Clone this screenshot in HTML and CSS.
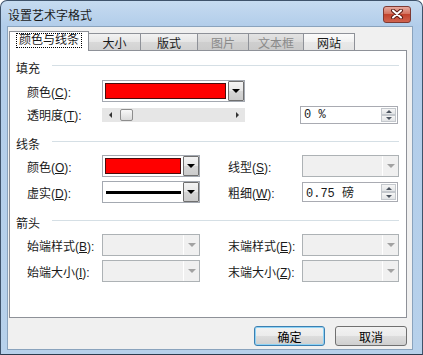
FILE: index.html
```html
<!DOCTYPE html>
<html lang="zh-CN">
<head>
    <meta charset="UTF-8">
    <title>设置艺术字格式</title>
    <link rel="stylesheet" href="styles.css">
</head>
<body>
    <div class="window">
        <div class="titlebar">
            <span class="title">设置艺术字格式</span>
            <span class="close">
                <svg width="14" height="10" viewBox="0 0 14 10">
                    <path d="M3 1.5 L11 8.5 M11 1.5 L3 8.5" stroke="#5a1d15" stroke-width="4" stroke-linecap="round"/>
                    <path d="M3 1.5 L11 8.5 M11 1.5 L3 8.5" stroke="#ffffff" stroke-width="2" stroke-linecap="round"/>
                </svg>
            </span>
        </div>

        <div class="client">
            <div class="tabs">
                <div class="tab active"><span class="focus">颜色与线条</span></div>
                <div class="tab t-size">大小</div>
                <div class="tab t-layout">版式</div>
                <div class="tab t-pic disabled">图片</div>
                <div class="tab t-text disabled">文本框</div>
                <div class="tab t-web light">网站</div>
            </div>

            <div class="panel">
                <!-- 填充 -->
                <div class="group"><span>填充</span><i class="rule"></i></div>
                <div class="row r-fill">
                    <span class="lbl">颜色(<u>C</u>):</span>
                    <div class="combo c-wide"><span class="swatch"></span><span class="drop"></span></div>
                </div>
                <div class="row r-alpha">
                    <span class="lbl">透明度(<u>T</u>):</span>
                    <div class="slider">
                        <span class="arr-l"></span>
                        <span class="thumb"></span>
                        <span class="arr-r"></span>
                    </div>
                    <div class="spin s-alpha"><span class="val">0 %</span><span class="spin-btns"><i class="up"></i><i class="down"></i></span></div>
                </div>

                <!-- 线条 -->
                <div class="group g-line"><span>线条</span><i class="rule"></i></div>
                <div class="row r-line">
                    <span class="lbl">颜色(<u>O</u>):</span>
                    <div class="combo c-narrow"><span class="swatch"></span><span class="drop"></span></div>
                    <span class="lbl lbl-right">线型(<u>S</u>):</span>
                    <div class="combo c-right off"><span class="drop"></span></div>
                </div>
                <div class="row r-dash">
                    <span class="lbl">虚实(<u>D</u>):</span>
                    <div class="combo c-narrow"><span class="dash"></span><span class="drop"></span></div>
                    <span class="lbl lbl-right">粗细(<u>W</u>):</span>
                    <div class="spin s-weight"><span class="val">0.75 磅</span><span class="spin-btns"><i class="up"></i><i class="down"></i></span></div>
                </div>

                <!-- 箭头 -->
                <div class="group g-arrow"><span>箭头</span><i class="rule"></i></div>
                <div class="row r-begin">
                    <span class="lbl">始端样式(<u>B</u>):</span>
                    <div class="combo c-narrow off"><span class="drop"></span></div>
                    <span class="lbl lbl-right">末端样式(<u>E</u>):</span>
                    <div class="combo c-right off"><span class="drop"></span></div>
                </div>
                <div class="row r-size">
                    <span class="lbl">始端大小(<u>I</u>):</span>
                    <div class="combo c-narrow off"><span class="drop"></span></div>
                    <span class="lbl lbl-right">末端大小(<u>Z</u>):</span>
                    <div class="combo c-right off"><span class="drop"></span></div>
                </div>
            </div>

            <div class="actions">
                <button class="btn default">确定</button>
                <button class="btn">取消</button>
            </div>
        </div>
    </div>
</body>
</html>
```

FILE: styles.css
```css
body {
    margin: 0;
    background: #ffffff;
    font-family: "Liberation Sans", "Noto Sans CJK SC", sans-serif;
    font-size: 12px;
    color: #1a1a1a;
}

.window {
    width: 423px;
    height: 355px;
    box-sizing: border-box;
    border: 1px solid #3f536b;
    border-bottom-color: #2c3b4d;
    border-radius: 7px 7px 0 0;
    padding: 0 9px 4px 6px;
    background: linear-gradient(#c6dbf0, #b2cdea 25px, #b7d1eb);
}

/* title bar */
.titlebar {
    height: 25px;
    display: flex;
    align-items: center;
    justify-content: space-between;
    padding-left: 1px;
}

.title {
    font-size: 12px;
    color: #1b1b1b;
    margin-top: 2px;
}

.close {
    width: 28px;
    height: 17px;
    margin-right: 2px;
    margin-top: 1px;
    box-sizing: border-box;
    border: 1px solid #7e3a33;
    border-radius: 3px;
    background: linear-gradient(#e6a99f, #d4735f 45%, #c2432c 50%, #d0634f);
    display: flex;
    align-items: center;
    justify-content: center;
}

/* client */
.client {
    height: 324px;
    box-sizing: border-box;
    border: 1px solid #8aa3bd;
    background: #f0f0f0;
}

.tabs {
    height: 23px;
    box-sizing: border-box;
    padding-top: 4px;
    margin-left: 1px;
    display: flex;
    align-items: flex-end;
}

.tab {
    height: 17px;
    box-sizing: border-box;
    border: 1px solid #8e9198;
    border-bottom: none;
    background: linear-gradient(#f2f2f2, #e6e6e6 50%, #d9d9d9 51%, #d2d2d2);
    display: flex;
    align-items: center;
    justify-content: center;
    margin-left: -1px;
}

.tab.active {
    position: relative;
    z-index: 1;
    width: 80px;
    height: 20px;
    margin-left: 0;
    margin-bottom: -1px;
    background: #ffffff;
    padding-bottom: 2px;
}

.focus {
    border: 1px dotted #000000;
    padding: 0 2px;
    line-height: 13px;
}

.t-size { width: 53px; }
.t-layout { width: 58px; }
.t-pic { width: 52px; }
.t-text { width: 56px; }
.t-web { width: 52px; }

.tab.disabled {
    color: #8a8a8a;
    background: linear-gradient(#e3e3e3, #d8d8d8 50%, #cfcfcf 51%, #cacaca);
}

.tab.light {
    background: linear-gradient(#fbfbfb, #f1f1f1 50%, #e9e9e9 51%, #e4e4e4);
}

.panel {
    width: 398px;
    height: 268px;
    margin-left: 1px;
    box-sizing: border-box;
    border: 1px solid #8e9198;
    background: #ffffff;
}

.group {
    height: 14px;
    margin-top: 9px;
    padding-left: 6px;
    display: flex;
    align-items: center;
}

.rule {
    flex: 1;
    height: 1px;
    margin: 0 7px 3px 12px;
    background: #d5dfe5;
}

.g-line,
.g-arrow {
    margin-top: 12px;
}

.row {
    display: flex;
    align-items: center;
    padding-left: 17px;
    height: 22px;
}

.r-fill { margin-top: 6px; }
.r-alpha { margin-top: 3px; height: 19px; }
.r-line { margin-top: 5px; }
.r-dash { margin-top: 4px; }
.r-begin { margin-top: 5px; }
.r-size { margin-top: 4px; }

.lbl {
    width: 75px;
    white-space: nowrap;
}

.lbl-right {
    width: 74px;
    margin-left: 28px;
}

/* combo boxes */
.combo {
    height: 22px;
    box-sizing: border-box;
    border: 1px solid #a4a9b1;
    background: #ffffff;
    display: flex;
    align-items: center;
    padding: 0 0 0 2px;
}

.c-wide { width: 143px; }
.c-narrow { width: 98px; }
.c-right { width: 97px; }

.swatch {
    flex: 1;
    height: 16px;
    box-sizing: border-box;
    border: 1px solid #4a0c0c;
    background: #ff0000;
    margin-right: 2px;
}

.dash {
    flex: 1;
    height: 3px;
    background: #000000;
    margin: 0 2px 0 1px;
}

.drop {
    width: 16px;
    height: 20px;
    box-sizing: border-box;
    border: 1px solid #6f6f6f;
    border-radius: 1px;
    background: linear-gradient(#f4f4f4, #e6e6e6 50%, #d6d6d6 51%, #cbcbcb);
    display: flex;
    align-items: center;
    justify-content: center;
    margin-left: auto;
}

.drop::after {
    content: "";
    border-left: 4px solid transparent;
    border-right: 4px solid transparent;
    border-top: 4px solid #000000;
}

.combo.off {
    background: #f0f0f0;
    border-color: #adb2b5;
}

.combo.off .drop {
    border: none;
    border-left: 1px solid #ffffff;
    background: #f0f0f0;
}

.combo.off .drop::after {
    border-top-color: #a2a2a2;
}

/* slider */
.slider {
    width: 143px;
    height: 14px;
    background: #e6e6e6;
    display: flex;
    align-items: center;
}

.arr-l {
    margin-left: 7px;
    border-top: 3px solid transparent;
    border-bottom: 3px solid transparent;
    border-right: 3px solid #333333;
}

.thumb {
    width: 13px;
    height: 12px;
    margin-left: 8px;
    box-sizing: border-box;
    border: 1px solid #8d8d8d;
    border-radius: 2px;
    background: linear-gradient(#f8f8f8, #dadada);
}

.arr-r {
    margin-left: auto;
    margin-right: 6px;
    border-top: 3px solid transparent;
    border-bottom: 3px solid transparent;
    border-left: 3px solid #333333;
}

/* spin boxes */
.spin {
    box-sizing: border-box;
    border: 1px solid #a9abb2;
    background: #ffffff;
    display: flex;
    align-items: center;
}

.s-alpha {
    width: 98px;
    height: 18px;
    margin-left: 55px;
}

.s-weight {
    width: 96px;
    height: 20px;
}

.val {
    padding-left: 3px;
    flex: 1;
    font-family: "Liberation Mono", "Noto Sans CJK SC", monospace;
}

.spin-btns {
    width: 15px;
    height: calc(100% - 2px);
    margin-right: 1px;
    display: flex;
    flex-direction: column;
}

.spin-btns i {
    flex: 1;
    box-sizing: border-box;
    border: 1px solid #c4c8cd;
    background: linear-gradient(#f6f6f6, #e2e4e6);
    display: flex;
    align-items: center;
    justify-content: center;
}

.spin-btns i.up::after {
    content: "";
    border-left: 3px solid transparent;
    border-right: 3px solid transparent;
    border-bottom: 3px solid #4d5560;
}

.spin-btns i.down::after {
    content: "";
    border-left: 3px solid transparent;
    border-right: 3px solid transparent;
    border-top: 3px solid #4d5560;
}

/* dialog buttons */
.actions {
    margin-top: 8px;
    padding-right: 5px;
    display: flex;
    justify-content: flex-end;
    gap: 10px;
}

.btn {
    width: 72px;
    height: 20px;
    box-sizing: border-box;
    border: 1px solid #707070;
    border-radius: 3px;
    background: linear-gradient(#f2f2f2, #ebebeb 50%, #dddddd 51%, #cfcfcf);
    font-family: "Liberation Sans", "Noto Sans CJK SC", sans-serif;
    font-size: 12px;
    color: #000000;
    padding: 0;
}

.btn.default {
    width: 71px;
    border-color: #3c7fb1;
    box-shadow: inset 0 0 0 1px #8fd3f5;
}
```
